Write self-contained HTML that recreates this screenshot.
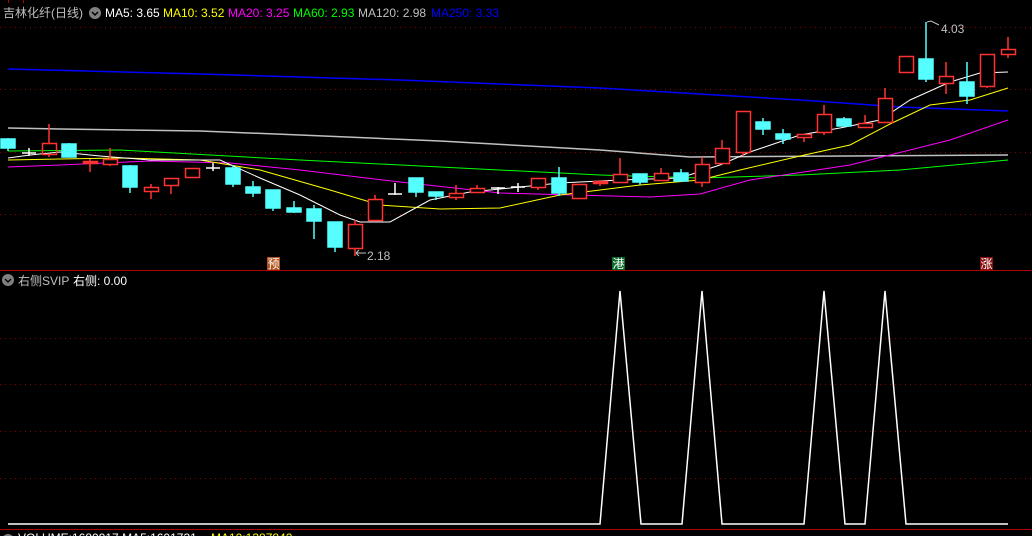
<!DOCTYPE html>
<html><head><meta charset="utf-8"><style>
body{margin:0;background:#000;width:1032px;height:536px;overflow:hidden;font-family:"Liberation Sans","Noto Sans CJK SC",sans-serif}
svg{display:block}
</style></head><body>
<svg width="1032" height="536" xmlns="http://www.w3.org/2000/svg" font-family="Liberation Sans, Noto Sans CJK SC, sans-serif">
<rect width="1032" height="536" fill="#000"/>
<g stroke="#8b0000" stroke-dasharray="1,4" stroke-width="1">
<line x1="0" y1="27.5" x2="1032" y2="27.5"/><line x1="0" y1="89.5" x2="1032" y2="89.5"/>
<line x1="0" y1="152.5" x2="1032" y2="152.5"/><line x1="0" y1="214.5" x2="1032" y2="214.5"/>
<line x1="0" y1="338.5" x2="1032" y2="338.5"/><line x1="0" y1="384.5" x2="1032" y2="384.5"/>
<line x1="0" y1="431.5" x2="1032" y2="431.5"/><line x1="0" y1="478.5" x2="1032" y2="478.5"/>
</g>
<line x1="0" y1="270.5" x2="1032" y2="270.5" stroke="#b00000"/>
<line x1="0" y1="529.5" x2="1032" y2="529.5" stroke="#b00000"/>
<line x1="8.5" y1="0" x2="8.5" y2="3" stroke="#b00000"/><line x1="23.5" y1="0" x2="23.5" y2="3" stroke="#b00000"/>

<g fill="none" stroke-width="1">
<polyline stroke="#0000ff" stroke-width="1.5" points="8,69 200,74 400,80 600,88 800,100 900,107 1008,111"/>
<polyline stroke="#c0c0c0" stroke-width="1.5" points="8,128 60,129 200,131 300,135 440,141 600,150 690,157 1008,155"/>
<polyline stroke="#00ff00" points="8,151 120,150 300,160 440,167 600,175 700,178 800,175 900,170 1008,160"/>
<polyline stroke="#ff00ff" points="8,167 60,165 150,161 230,163 300,170 400,182 500,193 650,197 700,194 750,180 850,165 950,140 1008,120"/>
<polyline stroke="#ffff00" points="8,160 60,159 120,158 200,160 260,170 330,190 380,205 440,209 500,208 560,195 640,185 700,180 740,170 800,156 850,145 890,124 930,105 970,100 1008,88"/>
<polyline stroke="#ffffff" points="8,158 30,155 60,152 100,156 150,160 220,160 260,178 300,195 340,215 360,222 390,222 430,200 470,192 520,187 560,183 620,180 680,178 720,165 750,152 800,135 840,128 880,120 910,100 950,82 980,73 1008,72"/>
</g>

<g stroke-width="1.5">
<g fill="#55ffff" stroke="#55ffff">
<line x1="8" y1="138" x2="8" y2="151"/><rect x="1" y="139" width="14" height="9"/>
<line x1="69" y1="143" x2="69" y2="157"/><rect x="62" y="144" width="14" height="13"/>
<line x1="130" y1="165" x2="130" y2="193"/><rect x="123" y="166" width="14" height="21"/>
<line x1="233" y1="165" x2="233" y2="187"/><rect x="226" y="168" width="14" height="16"/>
<line x1="253" y1="181" x2="253" y2="197"/><rect x="246" y="187" width="14" height="6"/>
<line x1="273" y1="190" x2="273" y2="211"/><rect x="266" y="190" width="14" height="18"/>
<line x1="294" y1="201" x2="294" y2="213"/><rect x="287" y="208" width="14" height="4"/>
<line x1="314" y1="205" x2="314" y2="239"/><rect x="307" y="209" width="14" height="12"/>
<line x1="335" y1="222" x2="335" y2="252"/><rect x="328" y="222" width="14" height="25"/>
<line x1="416" y1="178" x2="416" y2="197"/><rect x="409" y="178" width="14" height="14"/>
<line x1="436" y1="192" x2="436" y2="200"/><rect x="429" y="192" width="14" height="4"/>
<line x1="559" y1="167" x2="559" y2="196"/><rect x="552" y="178" width="14" height="15"/>
<line x1="640" y1="174" x2="640" y2="185"/><rect x="633" y="174" width="14" height="8"/>
<line x1="681" y1="169" x2="681" y2="181"/><rect x="674" y="173" width="14" height="8"/>
<line x1="763" y1="118" x2="763" y2="135"/><rect x="756" y="122" width="14" height="7"/>
<line x1="783" y1="129" x2="783" y2="144"/><rect x="776" y="134" width="14" height="5"/>
<line x1="844" y1="117" x2="844" y2="127"/><rect x="837" y="119" width="14" height="7"/>
<line x1="926" y1="22" x2="926" y2="82"/><rect x="919" y="59" width="14" height="20"/>
<line x1="967" y1="62" x2="967" y2="104"/><rect x="960" y="82" width="14" height="14"/>
</g>
<g fill="none" stroke="#ff3333">
<line x1="49" y1="124" x2="49" y2="143"/><line x1="49" y1="155" x2="49" y2="157"/><rect x="42.5" y="143.5" width="14" height="11"/>
<line x1="90" y1="159" x2="90" y2="172"/><rect x="83.5" y="161.5" width="14" height="2" fill="#ff3333"/>
<line x1="110" y1="148" x2="110" y2="166"/><rect x="103.5" y="159.5" width="14" height="5" fill="#000"/>
<line x1="151" y1="184" x2="151" y2="199"/><rect x="144.5" y="187.5" width="14" height="4" fill="#000"/>
<line x1="171" y1="178" x2="171" y2="194"/><rect x="164.5" y="178.5" width="14" height="7" fill="#000"/>
<rect x="185.5" y="168.5" width="14" height="9"/>
<line x1="355" y1="220" x2="355" y2="256"/><rect x="348.5" y="224.5" width="14" height="24" fill="#000"/>
<line x1="375" y1="195" x2="375" y2="221"/><rect x="368.5" y="199.5" width="14" height="21" fill="#000"/>
<line x1="456" y1="185" x2="456" y2="200"/><rect x="449.5" y="193.5" width="14" height="4" fill="#000"/>
<line x1="477" y1="185" x2="477" y2="193"/><rect x="470.5" y="188.5" width="14" height="4" fill="#000"/>
<line x1="538" y1="178" x2="538" y2="190"/><rect x="531.5" y="178.5" width="14" height="9" fill="#000"/>
<rect x="572.5" y="184.5" width="14" height="14" fill="#000"/>
<line x1="600" y1="181" x2="600" y2="186"/><rect x="593.5" y="181.5" width="14" height="2" fill="#ff3333"/>
<line x1="620" y1="158" x2="620" y2="183"/><rect x="613.5" y="174.5" width="14" height="8" fill="#000"/>
<line x1="661" y1="168" x2="661" y2="181"/><rect x="654.5" y="173.5" width="14" height="7" fill="#000"/>
<line x1="702" y1="157" x2="702" y2="187"/><rect x="695.5" y="164.5" width="14" height="18" fill="#000"/>
<line x1="722" y1="140" x2="722" y2="163"/><rect x="715.5" y="148.5" width="14" height="15" fill="#000"/>
<line x1="743" y1="152" x2="743" y2="156"/><rect x="736.5" y="111.5" width="14" height="41" fill="none"/>
<line x1="804" y1="134" x2="804" y2="142"/><rect x="797.5" y="134.5" width="14" height="3" fill="#000"/>
<line x1="824" y1="105" x2="824" y2="135"/><rect x="817.5" y="114.5" width="14" height="18" fill="#000"/>
<line x1="865" y1="115" x2="865" y2="127"/><rect x="858.5" y="123.5" width="14" height="4" fill="#000"/>
<line x1="885" y1="88" x2="885" y2="122"/><rect x="878.5" y="98.5" width="14" height="24" fill="#000"/>
<rect x="899.5" y="56.5" width="14" height="16"/>
<line x1="946" y1="62" x2="946" y2="94"/><rect x="939.5" y="76.5" width="14" height="7" fill="#000"/>
<line x1="987" y1="54" x2="987" y2="88"/><rect x="980.5" y="54.5" width="14" height="32" fill="#000"/>
<line x1="1008" y1="37" x2="1008" y2="58"/><rect x="1001.5" y="49.5" width="14" height="5" fill="#000"/>
</g>
<g stroke="#fff">
<line x1="29" y1="148" x2="29" y2="156"/><line x1="22" y1="153" x2="36" y2="153"/>
<line x1="213" y1="163" x2="213" y2="171"/><line x1="206" y1="168" x2="220" y2="168"/>
<line x1="395" y1="183" x2="395" y2="195"/><line x1="388" y1="194" x2="402" y2="194"/>
<line x1="498" y1="187" x2="498" y2="194"/><line x1="491" y1="188" x2="505" y2="188"/>
<line x1="518" y1="183" x2="518" y2="192"/><line x1="511" y1="187" x2="525" y2="187"/>
</g>
</g>

<g fill="#c0c0c0" font-size="12">
<text x="367" y="260">2.18</text>
<path d="M356 253 H366 M356 253 l3 -3 M356 253 l3 3" stroke="#c0c0c0" fill="none"/>
<text x="941" y="33">4.03</text>
<path d="M927 22 l4 -1 l8 4" stroke="#c0c0c0" fill="none"/>
</g>

<rect x="267" y="257" width="13" height="13" fill="#b0501a"/>
<text x="267.5" y="268" font-size="12" fill="#fff">预</text>
<rect x="612" y="257" width="13" height="13" fill="#0a6a2a"/>
<text x="612.5" y="268" font-size="12" fill="#fff">港</text>
<rect x="980" y="257" width="13" height="13" fill="#8a1010"/>
<text x="980.5" y="268" font-size="12" fill="#fff">涨</text>

<polyline fill="none" stroke="#fff" stroke-width="1.5" points="8,524 600,524 620,291 641,524 682,524 702,291 722,524 804,524 824,291 845,524 865,524 885,291 906,524 1008,524"/>

<g font-size="12">
<text x="3" y="17" fill="#c0c0c0">吉林化纤(日线)</text>
<circle cx="95" cy="13" r="6" fill="#808080"/>
<path d="M92 12 l3 3 l3 -3" stroke="#000" stroke-width="1.5" fill="none"/>
<text x="105" y="17" fill="#fff">MA5: 3.65</text>
<text x="163" y="17" fill="#ffff00">MA10: 3.52</text>
<text x="228" y="17" fill="#ff00ff">MA20: 3.25</text>
<text x="293" y="17" fill="#00ff00">MA60: 2.93</text>
<text x="358" y="17" fill="#c0c0c0">MA120: 2.98</text>
<text x="431" y="17" fill="#0000ff">MA250: 3.33</text>
<circle cx="8" cy="280" r="6" fill="#808080"/>
<path d="M5 279 l3 3 l3 -3" stroke="#000" stroke-width="1.5" fill="none"/>
<text x="18" y="285" fill="#c0c0c0">右侧SVIP</text>
<text x="73" y="285" fill="#fff">右侧: 0.00</text>
<circle cx="8" cy="540" r="6" fill="#808080"/>
<text x="18" y="542" fill="#fff">VOLUME:1680917 MA5:1601731</text>
<text x="211" y="542" fill="#ffff00">MA10:1387842</text>
</g>
</svg>
</body></html>
